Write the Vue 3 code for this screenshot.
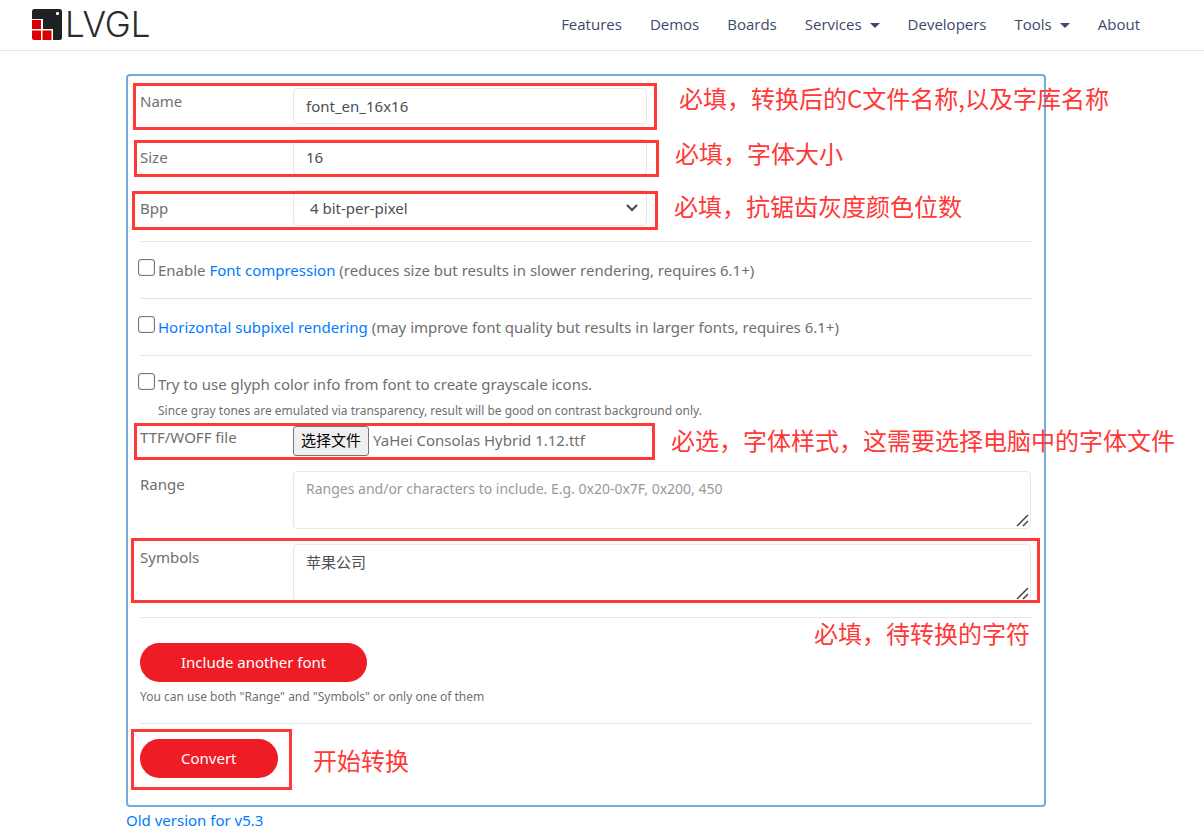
<script setup>
import { ref } from 'vue'

const links = [
  { label: 'Features' },
  { label: 'Demos' },
  { label: 'Boards' },
  { label: 'Services', menu: true },
  { label: 'Developers' },
  { label: 'Tools', menu: true },
  { label: 'About' },
]

const name = ref('font_en_16x16')
const size = ref('16')
const bpp = ref('4')
const compression = ref(false)
const subpixel = ref(false)
const colorInfo = ref(false)
const fileName = ref('YaHei Consolas Hybrid 1.12.ttf')
const range = ref('')
const symbols = ref('苹果公司')
const picker = ref(null)

function onFile(event) {
  const file = event.target.files[0]
  if (file) fileName.value = file.name
}
</script>

<template>
  <div class="page">
    <header class="topbar">
      <a class="brand" href="#" aria-label="LVGL home">
        <svg class="mark" viewBox="0 0 30 31" aria-hidden="true">
          <path d="M2.500 0H27.500Q30 0 30 2.500V28.500Q30 31 27.500 31H21V20H11V10H0V2.500Q0 0 2.500 0Z" fill="#1f2224" />
          <rect x="24" y="3" width="3" height="3" rx="1" fill="#fff" />
          <path d="M0 11H9V20H0ZM0 21.500H9V31H2Q0 31 0 29ZM10.500 21.500H19.500V31H10.500Z" fill="#d80000" />
        </svg>
        <span class="wordmark">LVGL</span>
      </a>
      <nav class="nav">
        <a v-for="link in links" :key="link.label" href="#">
          {{ link.label }}<i v-if="link.menu" class="caret"></i>
        </a>
      </nav>
    </header>

    <main class="content">
      <form class="card" @submit.prevent>
        <div class="row top">
          <label for="name">Name</label>
          <input id="name" v-model="name" class="field short" type="text" />
          <div class="mark-box box-name"></div>
          <p class="note note-name">必填，转换后的C文件名称,以及字库名称</p>
        </div>
        <div class="row">
          <label for="size">Size</label>
          <input id="size" v-model="size" class="field short" type="text" />
          <div class="mark-box box-size"></div>
          <p class="note note-size">必填，字体大小</p>
        </div>
        <div class="row">
          <label for="bpp">Bpp</label>
          <div class="select short">
            <select id="bpp" v-model="bpp" class="field">
              <option value="1">1 bit-per-pixel</option>
              <option value="2">2 bit-per-pixel</option>
              <option value="4">4 bit-per-pixel</option>
              <option value="8">8 bit-per-pixel</option>
            </select>
            <svg class="chevron" viewBox="0 0 12 8" aria-hidden="true">
              <path d="M1 1L6 6L11 1" fill="none" stroke="#40474e" stroke-width="2" />
            </svg>
          </div>
          <div class="mark-box box-bpp"></div>
          <p class="note note-bpp">必填，抗锯齿灰度颜色位数</p>
        </div>

        <hr />
        <div class="check">
          <input id="compression" v-model="compression" type="checkbox" />
          <label for="compression">Enable <a href="#">Font compression</a> (reduces size but results in slower rendering, requires 6.1+)</label>
        </div>
        <hr />
        <div class="check">
          <input id="subpixel" v-model="subpixel" type="checkbox" />
          <label for="subpixel"><a href="#">Horizontal subpixel rendering</a> (may improve font quality but results in larger fonts, requires 6.1+)</label>
        </div>
        <hr />
        <div class="check last">
          <input id="color-info" v-model="colorInfo" type="checkbox" />
          <label for="color-info">Try to use glyph color info from font to create grayscale icons.</label>
        </div>
        <p class="hint indent">Since gray tones are emulated via transparency, result will be good on contrast background only.</p>

        <div class="row file top">
          <label for="font-file">TTF/WOFF file</label>
          <div class="picker">
            <input id="font-file" ref="picker" class="hidden-file" type="file" accept=".ttf,.woff" @change="onFile" />
            <button type="button" class="choose" @click="picker.click()">选择文件</button>
            <span>{{ fileName }}</span>
          </div>
          <div class="mark-box box-file"></div>
          <p class="note note-file">必选，字体样式，这需要选择电脑中的字体文件</p>
        </div>
        <div class="row top">
          <label for="range">Range</label>
          <div class="area">
            <textarea id="range" v-model="range" class="field" placeholder="Ranges and/or characters to include. E.g. 0x20-0x7F, 0x200, 450"></textarea>
            <svg class="grip" viewBox="0 0 13 13" aria-hidden="true"><path d="M1 12L12 1M7 12L12 7" stroke="#444" stroke-width="1.500" /></svg>
          </div>
        </div>
        <div class="row top">
          <label for="symbols">Symbols</label>
          <div class="area">
            <textarea id="symbols" v-model="symbols" class="field"></textarea>
            <svg class="grip" viewBox="0 0 13 13" aria-hidden="true"><path d="M1 12L12 1M7 12L12 7" stroke="#444" stroke-width="1.500" /></svg>
          </div>
          <div class="mark-box box-symbols"></div>
          <p class="note note-symbols">必填，待转换的字符</p>
        </div>

        <hr />
        <div class="include">
          <button type="button" class="pill">Include another font</button>
          <p class="hint">You can use both "Range" and "Symbols" or only one of them</p>
        </div>
        <hr />
        <div class="submit">
          <button type="submit" class="pill">Convert</button>
          <div class="mark-box box-convert"></div>
          <p class="note note-convert">开始转换</p>
        </div>
      </form>
      <a class="old" href="#">Old version for v5.3</a>
    </main>
  </div>
</template>

<style>
body {
  margin: 0;
  background: #fff;
}
</style>

<style scoped>
.page {
  font-family: "Noto Sans", "Noto Sans CJK SC", sans-serif;
  font-size: 15px;
  line-height: 24px;
  color: #6f6f6f;
}
.page * {
  box-sizing: border-box;
}
p {
  margin: 0;
}
a {
  color: #007bff;
  text-decoration: none;
}
.topbar {
  display: flex;
  align-items: center;
  justify-content: space-between;
  height: 51px;
  padding: 0 64px 2px 32px;
  border-bottom: 1px solid #e6e6e6;
}
.brand {
  display: flex;
  align-items: center;
  gap: 3px;
  height: 48px;
  color: #2b2b2b;
}
.mark {
  width: 30px;
  height: 31px;
}
.wordmark {
  font-family: Inter, sans-serif;
  font-size: 35px;
  font-weight: 300;
  line-height: 48px;
}
.nav {
  display: flex;
  gap: 28px;
  font-family: "Open Sans", sans-serif;
}
.nav a {
  color: #3b4a6b;
  white-space: nowrap;
}
.caret {
  display: inline-block;
  margin-left: 8px;
  vertical-align: 2px;
  border: 5px solid transparent;
  border-top-color: #3b4a6b;
  border-bottom: 0;
}
.content {
  padding: 23px 158px 0 126px;
}
.card {
  padding: 12px 12px 27px;
  border: 2px solid #79a8da;
  border-radius: 4px;
}
.row {
  position: relative;
  display: grid;
  grid-template-columns: 153px 1fr;
  align-items: center;
  margin-bottom: 15px;
  padding-right: 1px;
}
.row.top > label {
  align-self: start;
  padding-top: 1px;
}
.field {
  display: block;
  width: 100%;
  height: 36px;
  margin: 0;
  padding: 0 12px;
  border: 1px solid #e8e8e8;
  border-radius: 4px;
  outline: none;
  background: #fff;
  color: #495057;
  font: inherit;
}
.short {
  max-width: 354px;
}
.select,
.area {
  position: relative;
}
select.field {
  padding-left: 16px;
  appearance: none;
}
.chevron {
  position: absolute;
  top: 14px;
  right: 9px;
  width: 12px;
  height: 8px;
  pointer-events: none;
}
textarea.field {
  height: 58px;
  padding: 5px 12px;
  resize: none;
}
textarea::placeholder {
  color: #999;
  font-size: 14px;
  opacity: 1;
}
.grip {
  position: absolute;
  right: 2px;
  bottom: 2px;
  width: 13px;
  height: 13px;
  pointer-events: none;
}
hr {
  height: 1px;
  margin: 0;
  border: 0;
  background: #e4e4e4;
}
.check {
  display: flex;
  align-items: flex-start;
  gap: 3px;
  padding: 16px 0;
}
.check.last {
  padding-bottom: 0;
}
.check input {
  flex: none;
  width: 17px;
  height: 17px;
  margin: 1px 0 0 -2px;
  appearance: none;
  border: 1px solid #767676;
  border-radius: 3px;
  background: #fff;
  box-shadow: inset 0 0 1px #767676;
}
.check input:checked {
  background: #007bff;
}
.hint {
  margin-top: 3px;
  font-size: 12px;
}
.indent {
  padding-left: 18px;
}
.file {
  margin-top: 3px;
}
.file > label {
  margin-top: -2px;
}
.picker {
  position: relative;
  display: flex;
  align-items: center;
  gap: 4px;
}
.picker span {
  padding-bottom: 2px;
}
.hidden-file {
  position: absolute;
  width: 1px;
  height: 1px;
  opacity: 0;
}
.choose {
  height: 30px;
  padding: 0 7px 2px;
  border: 1px solid #767676;
  border-radius: 3px;
  background: #efefef;
  color: #000;
  font: inherit;
}
.include {
  padding: 25px 0 14px;
}
.submit {
  position: relative;
  padding-top: 15px;
}
.pill {
  display: block;
  height: 39px;
  padding: 0 41px 2px;
  border: 0;
  border-radius: 20px;
  background: #ee1c25;
  color: #fff;
  font: inherit;
}
.old {
  display: inline-block;
  margin-top: 1px;
}

/* Red call-outs laid over the form */
.mark-box {
  position: absolute;
  border: 3px solid #ff3838;
  pointer-events: none;
}
.note {
  position: absolute;
  color: #ff3838;
  font-family: "Noto Sans CJK SC", sans-serif;
  font-size: 24px;
  line-height: 36px;
  white-space: nowrap;
  pointer-events: none;
}
.box-name {
  top: -5px;
  left: -7px;
  width: 524px;
  height: 47px;
}
.note-name {
  top: -8px;
  left: 539px;
}
.box-size {
  top: 1px;
  left: -6px;
  width: 525px;
  height: 37px;
}
.note-size {
  top: -4px;
  left: 535px;
}
.box-bpp {
  top: 1px;
  left: -8px;
  width: 526px;
  height: 39px;
}
.note-bpp {
  top: -2px;
  left: 534px;
}
.box-file {
  top: -3px;
  left: -6px;
  width: 521px;
  height: 37px;
}
.note-file {
  top: -4px;
  left: 531px;
}
.box-symbols {
  top: -6px;
  right: -8px;
  left: -9px;
  height: 65px;
}
.note-symbols {
  top: 71px;
  right: 2px;
}
.box-convert {
  top: 5px;
  left: -9px;
  width: 161px;
  height: 61px;
}
.note-convert {
  top: 18px;
  left: 173px;
}
</style>
